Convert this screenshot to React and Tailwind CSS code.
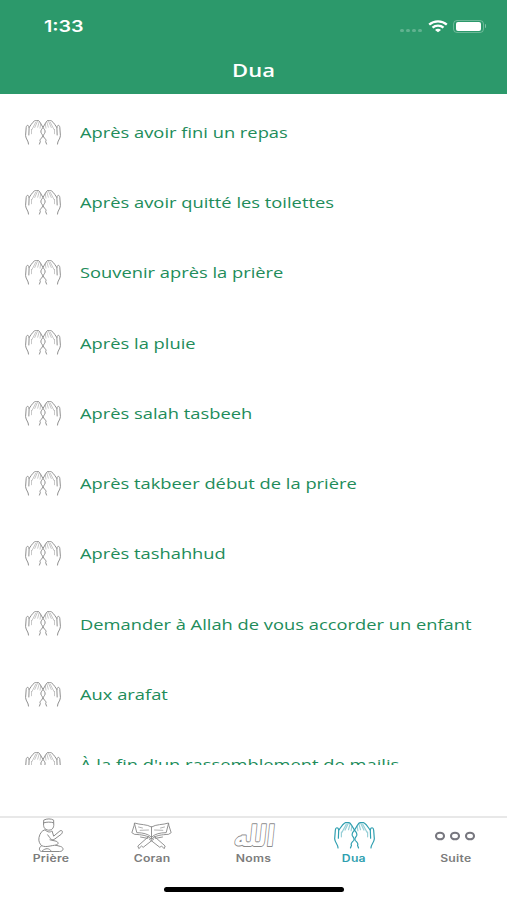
const duas = [
  "Après avoir fini un repas",
  "Après avoir quitté les toilettes",
  "Souvenir après la prière",
  "Après la pluie",
  "Après salah tasbeeh",
  "Après takbeer début de la prière",
  "Après tashahhud",
  "Demander à Allah de vous accorder un enfant",
  "Aux arafat",
  "À la fin d'un rassemblement de majlis",
];

function Hand() {
  return (
    <>
      <path d="M12 77C12 66 3 62 2 50L4 24C5 15 12 15 14 23L13 48" />
      <path d="M14 24C18 20 24 8 32 3C36 0 38 2 41 2C46 0 49 4 52 9L61 24C57 30 53 32 54 39C56 46 62 47 59 54C54 61 48 63 52 69L49 77" />
      <path d="M22 30V44M24 30L37 6M33 24L42 5M43 23L48 6M51 26L53 13" strokeOpacity="0.5" />
    </>
  );
}

function HandsIcon({ className }) {
  return (
    <svg
      viewBox="0 0 122 80"
      preserveAspectRatio="none"
      fill="none"
      stroke="currentColor"
      strokeLinecap="round"
      strokeLinejoin="round"
      className={className}
    >
      <Hand />
      <g transform="translate(122 0) scale(-1 1)">
        <Hand />
      </g>
    </svg>
  );
}

function PrayerIcon() {
  return (
    <svg
      viewBox="0 0 78 102"
      fill="none"
      stroke="currentColor"
      strokeWidth="3"
      strokeLinecap="round"
      strokeLinejoin="round"
      className="h-[35px] w-[26px]"
    >
      <path d="M17 13V5C26 0 40 0 47 5V13C38 10 27 10 17 13Z" />
      <path d="M17 13C15 25 19 34 32 35C45 35 49 25 47 13" />
      <path d="M20 34C11 37 6 44 3 57C1 69 5 75 11 82C3 85 1 98 11 99H64C78 99 78 87 68 84L53 80C63 77 62 71 54 68L36 64" />
      <path d="M22 35C30 42 37 42 42 37L47 53L66 37C73 34 76 40 70 47L51 61C44 66 38 63 35 57L29 49" />
      <path d="M12 82C25 88 41 80 53 80M13 97C23 88 33 88 40 98" />
    </svg>
  );
}

function QuranIcon() {
  return (
    <svg
      viewBox="0 0 122 84"
      fill="none"
      stroke="currentColor"
      strokeWidth="2.8"
      strokeLinecap="round"
      strokeLinejoin="round"
      className="h-[28px] w-[41px]"
    >
      <path d="M61 15C47 6 27 9 10 3L9 10L2 32L10 37C30 38 50 40 61 52C72 40 92 38 112 37L120 32L113 10L112 3C95 9 75 6 61 15Z" />
      <path d="M61 15V50M10 5L17 32C36 32 51 36 61 46C71 36 86 32 105 32L112 5" />
      <path d="M22 15L34 18M27 25L52 24M100 15L88 18M95 25L70 24" strokeOpacity="0.7" />
      <path d="M53 43L20 72L23 80L31 72L36 76L68 51M69 43L102 72L99 80L91 72L86 76L54 51M28 45L49 49M94 45L73 49" />
    </svg>
  );
}

function NamesIcon() {
  return (
    <svg viewBox="0 0 42 30" className="h-[30px] w-[42px] overflow-visible">
      <text
        x="0"
        y="0"
        transform="translate(21.5 24.5) skewX(-6) scale(0.9 1.1)"
        textAnchor="middle"
        direction="rtl"
        fill="#fff"
        stroke="currentColor"
        strokeWidth="1.7"
        strokeLinejoin="round"
        paintOrder="stroke"
        className="font-['DejaVu_Sans',sans-serif] text-[26px] font-bold"
      >
        الله
      </text>
    </svg>
  );
}

function MoreIcon() {
  return (
    <svg viewBox="0 0 42 10" fill="none" stroke="#77777f" strokeWidth="2.1" className="h-[10px] w-[42px]">
      <ellipse cx="6" cy="5" rx="4" ry="3.3" />
      <ellipse cx="21" cy="5" rx="4" ry="3.3" />
      <ellipse cx="36" cy="5" rx="4" ry="3.3" />
    </svg>
  );
}

const tabs = [
  { label: "Prière", icon: <PrayerIcon /> },
  { label: "Coran", icon: <QuranIcon /> },
  { label: "Noms", icon: <NamesIcon /> },
  { label: "Dua", icon: <HandsIcon className="h-[27px] w-[41px] stroke-[3.5]" />, active: true },
  { label: "Suite", icon: <MoreIcon /> },
];

function StatusBar() {
  return (
    <div className="flex h-[52px] items-center justify-between pr-[21px] pl-[44px] text-white">
      <span className="origin-left scale-x-[1.23] font-['Inter',sans-serif] text-[16px] font-semibold">
        1:33
      </span>
      <div className="flex items-center">
        <div className="mt-[8px] flex gap-[2px]">
          {[0, 1, 2, 3].map((dot) => (
            <span key={dot} className="h-[3px] w-[4px] rounded-full bg-white/25" />
          ))}
        </div>
        <svg viewBox="0 0 20 13" fill="none" stroke="currentColor" strokeWidth="2.3" className="ml-[6px] h-[13px] w-[20px]">
          <path d="M1.2 4.6C6 .2 14 .2 18.8 4.6M4.5 7.7C7.6 4.9 12.4 4.9 15.5 7.7" />
          <path d="M10 12.2L7 9.9C8.5 8.5 11.5 8.5 13 9.9Z" fill="currentColor" stroke="none" />
        </svg>
        <div className="ml-[5px] h-[13px] w-[31px] rounded-[4px] border border-white/30 px-[2px] py-[1px]">
          <div className="h-full w-full rounded-[2px] bg-white" />
        </div>
        <span className="ml-[1px] h-[4px] w-[1.5px] rounded-r-full bg-white/40" />
      </div>
    </div>
  );
}

export default function App() {
  return (
    <div className="flex h-[900px] w-[507px] flex-col overflow-hidden bg-white font-['Open_Sans','Noto_Sans',sans-serif]">
      <header className="h-[93.5px] shrink-0 bg-[#2c996b]">
        <StatusBar />
        <h1 className="flex h-[36px] origin-center scale-x-[1.22] items-center justify-center text-[18px] font-semibold text-white">
          Dua
        </h1>
      </header>

      <ul className="mt-[3.5px] h-[668px] shrink-0 overflow-hidden">
        {duas.map((dua) => (
          <li key={dua} className="flex h-[70.25px] items-center pl-[24.5px]">
            <HandsIcon className="h-[25px] w-[36px] shrink-0 stroke-[3.2] text-[#8b8b8b]" />
            <span className="ml-[19.5px] origin-left scale-x-[1.221] text-[15px] whitespace-nowrap text-[#218c5a]">
              {dua}
            </span>
          </li>
        ))}
      </ul>

      <nav className="mt-auto flex h-[84px] shrink-0 flex-col border-t-2 border-[#e8e8e8]">
        <div className="grid w-[506px] grid-cols-5">
          {tabs.map(({ label, icon, active }) => (
            <div
              key={label}
              className={`flex flex-col items-center ${active ? "text-[#2f9fb0]" : "text-[#8b8b8b]"}`}
            >
              <div className="flex h-[35px] items-center">{icon}</div>
              <span
                className={`scale-x-[1.22] font-['Inter',sans-serif] text-[10px] leading-[11px] font-semibold tracking-[0.02em] ${active ? "" : "text-[#7c7c7c]"}`}
              >
                {label}
              </span>
            </div>
          ))}
        </div>
        <div className="mx-auto mt-auto mb-[8px] h-[5px] w-[180px] rounded-full bg-black" />
      </nav>
    </div>
  );
}
